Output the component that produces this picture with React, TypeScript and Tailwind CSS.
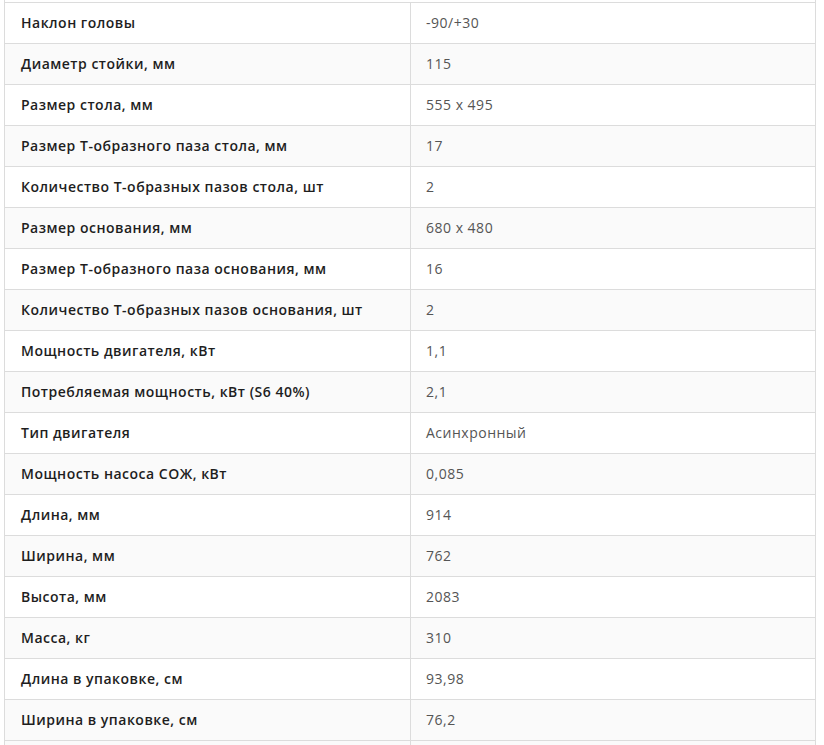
const rows: [string, string][] = [
  ["Наклон головы", "-90/+30"],
  ["Диаметр стойки, мм", "115"],
  ["Размер стола, мм", "555 x 495"],
  ["Размер Т-образного паза стола, мм", "17"],
  ["Количество Т-образных пазов стола, шт", "2"],
  ["Размер основания, мм", "680 x 480"],
  ["Размер Т-образного паза основания, мм", "16"],
  ["Количество Т-образных пазов основания, шт", "2"],
  ["Мощность двигателя, кВт", "1,1"],
  ["Потребляемая мощность, кВт (S6 40%)", "2,1"],
  ["Тип двигателя", "Асинхронный"],
  ["Мощность насоса СОЖ, кВт", "0,085"],
  ["Длина, мм", "914"],
  ["Ширина, мм", "762"],
  ["Высота, мм", "2083"],
  ["Масса, кг", "310"],
  ["Длина в упаковке, см", "93,98"],
  ["Ширина в упаковке, см", "76,2"],
];

export default function App() {
  return (
    <div className="h-[745px] overflow-hidden bg-white font-['Open_Sans',sans-serif] text-[14px] tracking-[0.5px]">
      <div className="ml-[4px] w-[812px] border-x border-[#dcdcdc] pt-[2px]">
        <div className="border-t border-[#dcdcdc]">
          {rows.map(([label, value], i) => (
            <div
              key={label}
              className={`grid h-[41px] grid-cols-[406px_1fr] border-b border-[#dcdcdc] ${
                i % 2 === 1 ? "bg-[#fafafa]" : "bg-white"
              }`}
            >
              {/* label */}
              <div className="flex items-center border-r border-[#dcdcdc] pb-[2px] pl-[16px] font-semibold text-[#1e1e1e]">
                {label}
              </div>
              {/* value */}
              <div className="flex items-center pb-[2px] pl-[15px] text-[#555]">{value}</div>
            </div>
          ))}
          {/* next row, cut by the window edge */}
          <div className="grid h-[41px] grid-cols-[406px_1fr] bg-[#fafafa]">
            <div className="border-r border-[#dcdcdc]" />
            <div />
          </div>
        </div>
      </div>
    </div>
  );
}
